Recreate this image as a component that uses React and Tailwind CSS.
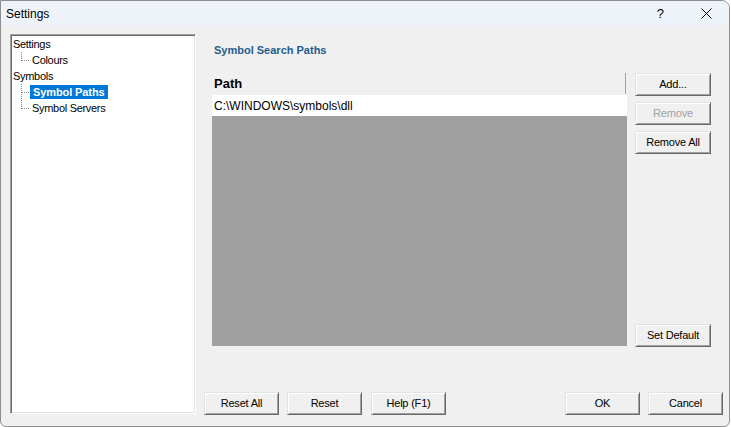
import React from "react";

const btn =
  "h-[23px] w-[75px] flex items-center justify-center text-[11px] tracking-[-0.2px] text-black bg-[#f0f0f0] border border-t-[#e3e3e3] border-l-[#e3e3e3] border-r-[#696969] border-b-[#696969] shadow-[inset_1px_1px_0_#ffffff,inset_-1px_-1px_0_#a0a0a0]";

function Connector({ cont }) {
  return (
    <svg width="9" height="16" className="shrink-0">
      <line x1="0.5" y1="0" x2="0.5" y2={cont ? 16 : 9} stroke="#8a8a8a" strokeDasharray="1 1" />
      <line x1="1" y1="8.5" x2="9" y2="8.5" stroke="#8a8a8a" strokeDasharray="1 1" />
    </svg>
  );
}

function ChildRow({ children, cont }) {
  return (
    <div className="h-[16px] flex items-center">
      <div className="w-[9px] shrink-0" />
      <Connector cont={cont} />
      {children}
    </div>
  );
}

export default function App() {
  return (
    <div className="w-[731px] h-[427px] bg-white font-['Liberation_Sans',Arial,sans-serif] text-black">
      <div className="w-[730px] h-[427px] flex flex-col border border-[#8e8e8e] rounded-tr-[8px] rounded-br-[6px] rounded-bl-[6px] overflow-hidden bg-[#f0f0f0]">
        {/* Title bar */}
        <div className="h-[25px] shrink-0 flex items-center bg-[#eef3fa] pl-[5px]">
          <span className="text-[12px]">Settings</span>
          <span className="ml-auto text-[13px] leading-none">?</span>
          <svg width="11" height="11" className="ml-[37px] mr-[17px]" viewBox="0 0 11 11">
            <line x1="0.5" y1="0.5" x2="10.5" y2="10.5" stroke="#000" strokeWidth="1" />
            <line x1="10.5" y1="0.5" x2="0.5" y2="10.5" stroke="#000" strokeWidth="1" />
          </svg>
        </div>

        {/* Body */}
        <div className="flex flex-1">
          {/* Tree */}
          <div className="ml-[9px] mt-[8px] w-[186px] h-[380px] shrink-0 bg-white border border-t-[#a0a0a0] border-l-[#a0a0a0] border-r-white border-b-white shadow-[inset_1px_1px_0_#696969,inset_-1px_-1px_0_#e3e3e3] pt-[1px] pl-[1px] text-[11px] tracking-[-0.3px]">
            <div className="h-[16px] flex items-center pl-[1px]">Settings</div>
            <ChildRow>
              <span className="pl-[2px]">Colours</span>
            </ChildRow>
            <div className="h-[16px] flex items-center pl-[1px]">Symbols</div>
            <ChildRow cont>
              <span className="bg-[#0078d7] text-white font-bold px-[3px] leading-[14px] tracking-[-0.1px]">
                Symbol Paths
              </span>
            </ChildRow>
            <ChildRow>
              <span className="pl-[2px]">Symbol Servers</span>
            </ChildRow>
          </div>

          {/* Right side */}
          <div className="flex-1 flex flex-col">
            <div className="mt-[17px] pl-[18px] text-[11px] leading-[14px] font-bold text-[#1f5d8d]">
              Symbol Search Paths
            </div>

            <div className="mt-[15px] pl-[16px] flex gap-[8px]">
              <div className="w-[415px] h-[274px] flex flex-col">
                <div className="h-[23px] flex items-center justify-between">
                  <span className="pl-[2px] text-[13px] font-bold">Path</span>
                  <div className="w-[1px] h-[21px] bg-[#a0a0a0] mr-[1px]" />
                </div>
                <div className="h-[21px] bg-white pl-[2px] flex items-center text-[12px]">
                  C:\WINDOWS\symbols\dll
                </div>
                <div className="flex-1 bg-[#a0a0a0]" />
              </div>

              <div className="w-[76px] h-[275px] flex flex-col pt-[1px]">
                <div className={btn + " w-[76px]"}>Add...</div>
                <div className={btn + " w-[76px] mt-[6px]"}>
                  <span className="text-[#a0a0a0]">Remove</span>
                </div>
                <div className={btn + " w-[76px] mt-[6px]"}>Remove All</div>
                <div className={btn + " w-[76px] mt-auto"}>Set Default</div>
              </div>
            </div>

            <div className="mt-auto mb-[11px] flex pl-[8px] pr-[6px]">
              <div className={btn}>Reset All</div>
              <div className={btn + " ml-[8px]"}>Reset</div>
              <div className={btn + " ml-[9px]"}>Help (F1)</div>
              <div className={btn + " ml-auto"}>OK</div>
              <div className={btn + " ml-[8px]"}>Cancel</div>
            </div>
          </div>
        </div>
      </div>
    </div>
  );
}
